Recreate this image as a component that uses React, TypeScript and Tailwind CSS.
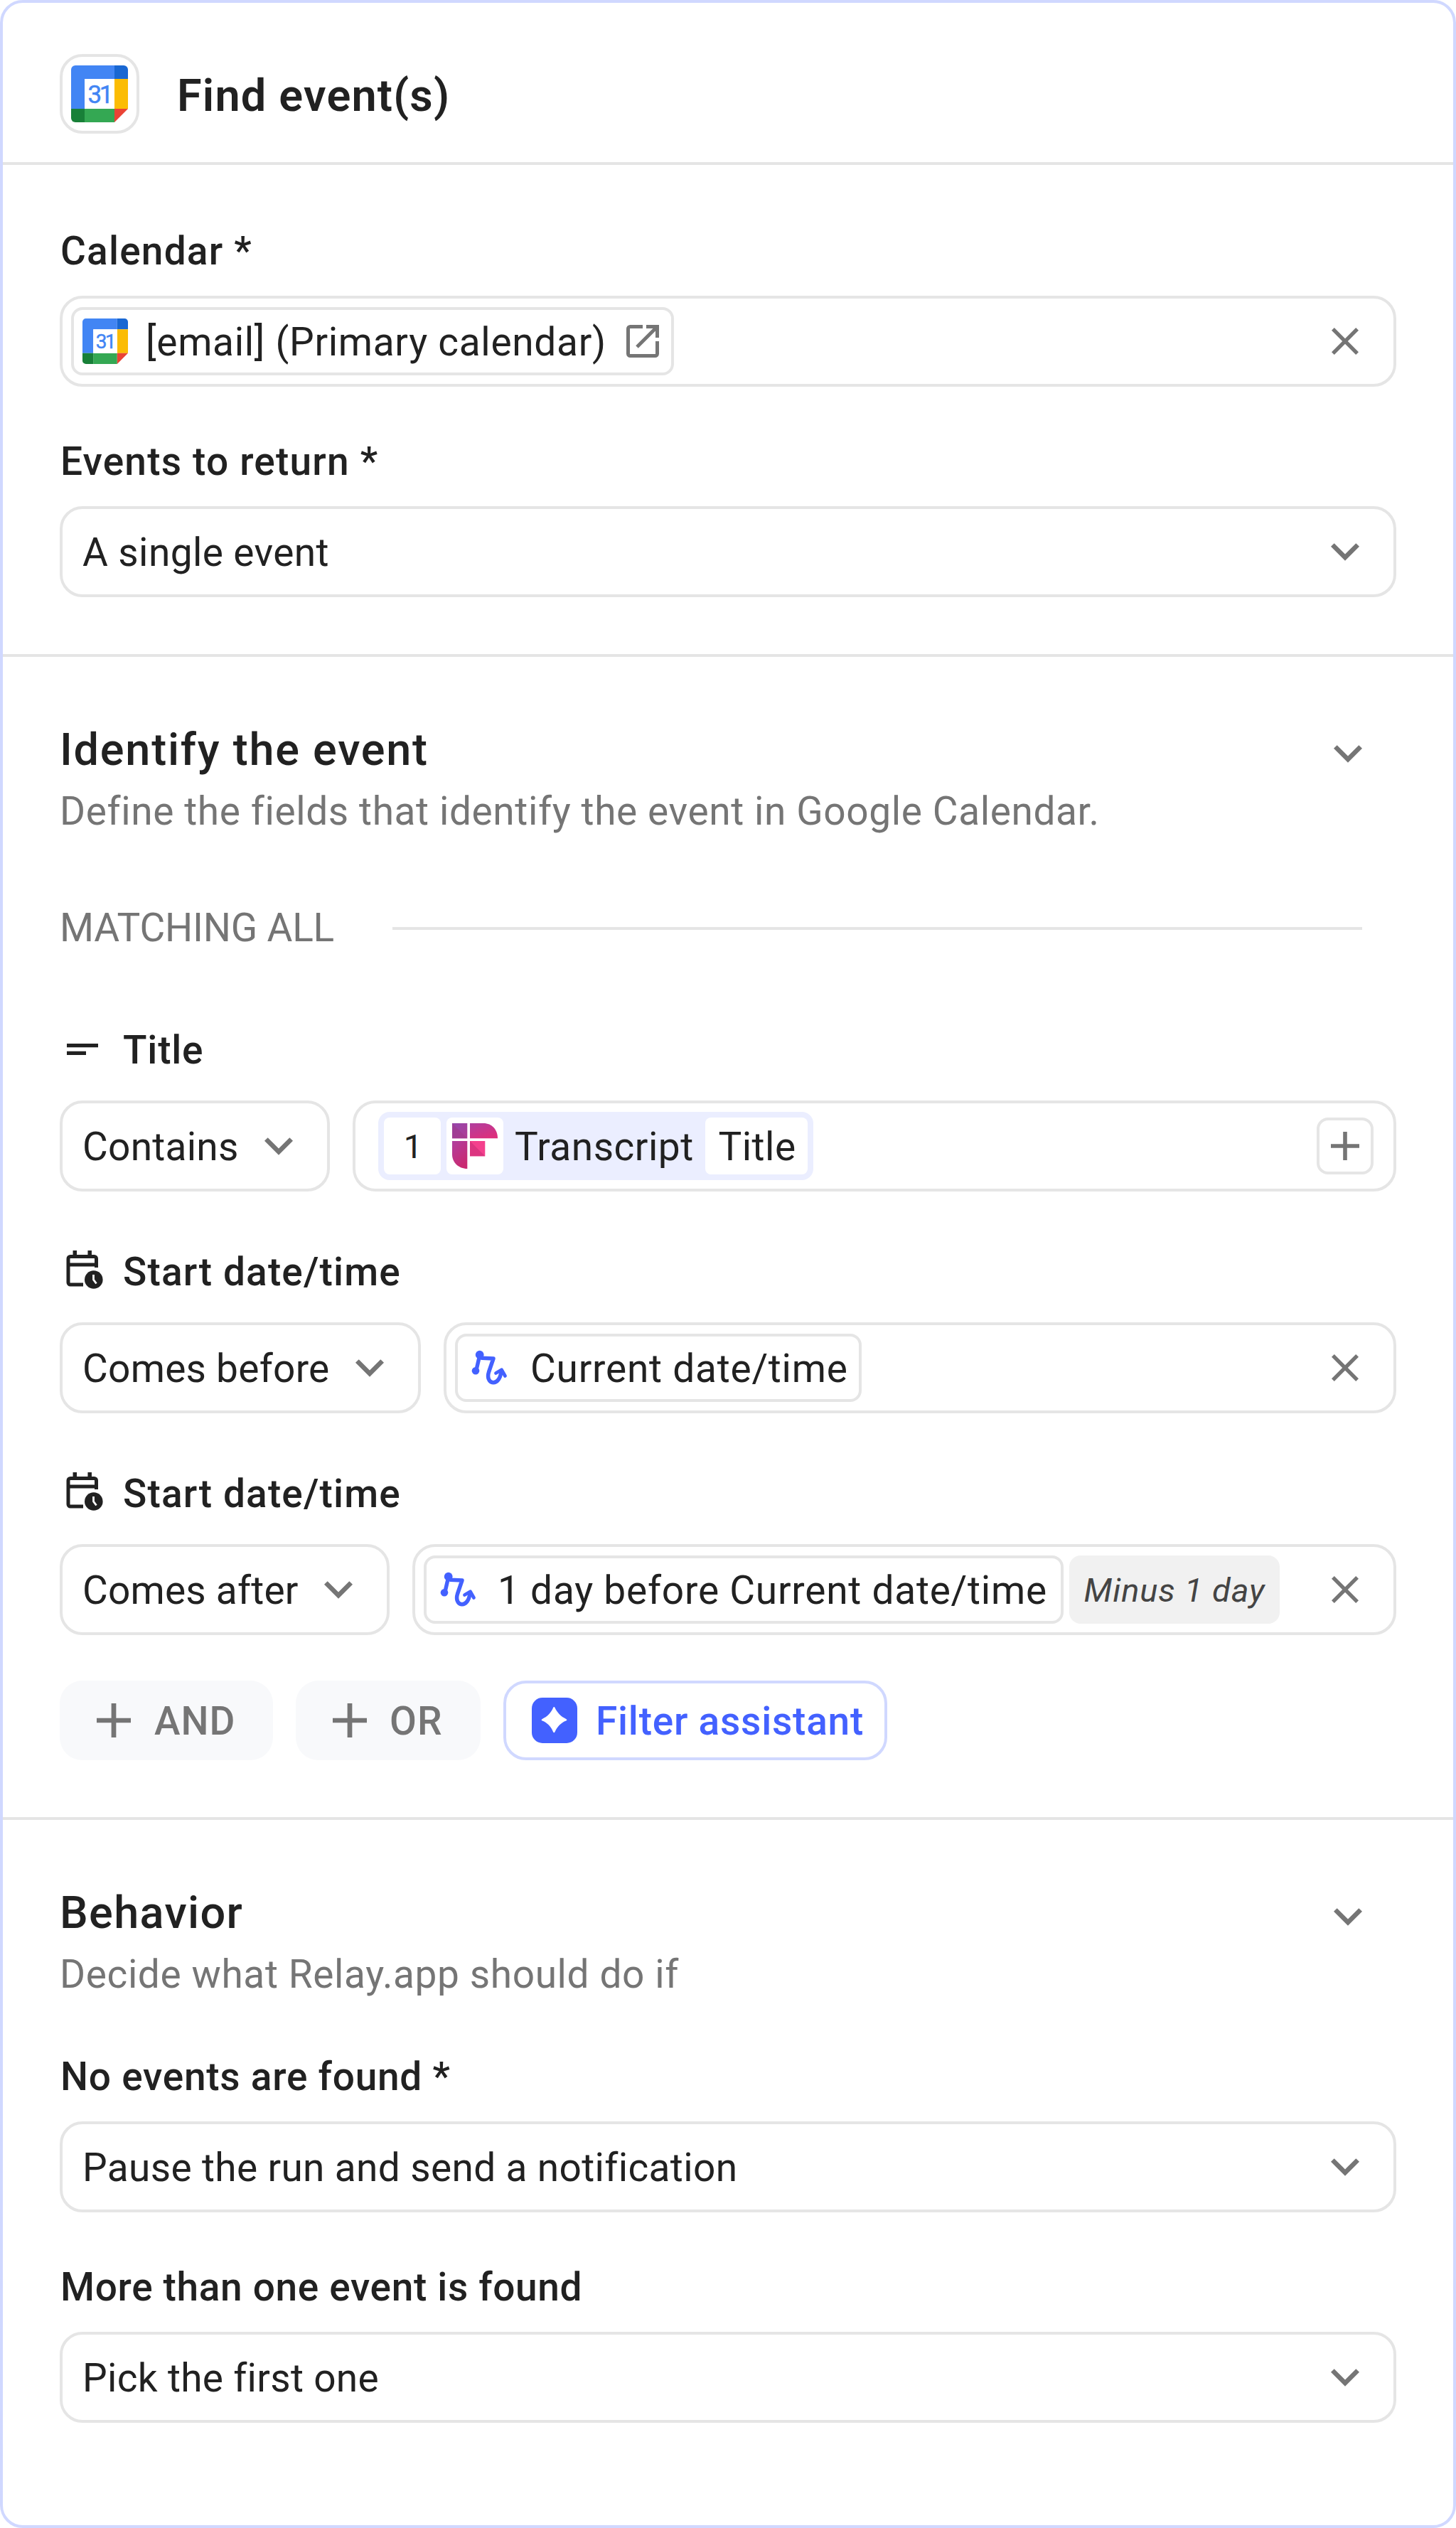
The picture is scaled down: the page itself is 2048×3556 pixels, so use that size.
import type { ReactNode } from 'react';
import clsx from 'clsx';

function GoogleCalendarIcon({ className }: { className?: string }) {
  return (
    <svg viewBox="0 0 80 80" className={clsx('shrink-0', className)}>
      <path d="M19 19h42V0H6a6 6 0 0 0-6 6v55h19z" fill="#4285f4" />
      <path d="M61 0h13a6 6 0 0 1 6 6v13H61z" fill="#1967d2" />
      <path d="M61 19h19v42H61z" fill="#fbbc04" />
      <path d="M19 61h42v19H19z" fill="#34a853" />
      <path d="M0 61h19v19H6a6 6 0 0 1-6-6z" fill="#188038" />
      <path d="M61 61h19L61 80z" fill="#ea4335" />
      <path d="M19 19h42v42H19z" fill="#fff" />
      <text
        x="23.5"
        y="53"
        textLength="36"
        className="font-[Roboto] text-[35px]"
        fill="#4285f4"
        stroke="#4285f4"
        strokeWidth="0.5"
      >
        31
      </text>
    </svg>
  );
}

function ChevronIcon({ className }: { className?: string }) {
  return (
    <svg viewBox="6 8.6 12 7.4" className={clsx('w-10 h-[25px] shrink-0 fill-[#757575]', className)}>
      <path d="M16.59 8.59 12 13.17 7.41 8.59 6 10l6 6 6-6z" />
    </svg>
  );
}

function CloseIcon() {
  return (
    <svg viewBox="5 5 14 14" className="size-[38px] shrink-0 fill-[#757575] ml-auto mr-[49px]">
      <path d="M19 6.41 17.59 5 12 10.59 6.41 5 5 6.41 10.59 12 5 17.59 6.41 19 12 13.41 17.59 19 19 17.59 13.41 12z" />
    </svg>
  );
}

function PlusIcon({ className }: { className?: string }) {
  return (
    <svg viewBox="0 0 40 40" className={clsx('shrink-0 stroke-[#757575]', className)}>
      <path d="M20 0v40M0 20h40" strokeWidth="5.6" />
    </svg>
  );
}

function OpenIcon() {
  return (
    <svg viewBox="0 0 64 64" className="size-16 shrink-0 ml-auto mr-2" fill="none" stroke="#757575" strokeWidth="5">
      <path d="M32 11.5H14.5a3 3 0 0 0-3 3v35a3 3 0 0 0 3 3h35a3 3 0 0 0 3-3V32" />
      <path d="M37 11.5h15.5V27M52.5 11.5 24 40" />
    </svg>
  );
}

function ShortTextIcon() {
  return (
    <svg viewBox="0 0 64 64" className="size-16 shrink-0" fill="#212121">
      <path d="M10 24h44v5.3H10zM10 34.7h27V40H10z" />
    </svg>
  );
}

function CalendarClockIcon() {
  return (
    <svg viewBox="0 0 64 64" className="size-16 shrink-0" fill="none" stroke="#212121" strokeWidth="5">
      <path d="M21.3 3v8M42.2 3v8" strokeWidth="5.5" />
      <path d="M33 51H15a3 3 0 0 1-3-3V14.5a3 3 0 0 1 3-3h33.500a3 3 0 0 1 3 3V27" />
      <path d="M12 23h39.5" />
      <circle cx="47.8" cy="44" r="12.8" fill="#212121" stroke="none" />
      <path d="M47.5 37v7l4 5.5" stroke="#fff" strokeWidth="2.8" />
    </svg>
  );
}

function RelayIcon() {
  return (
    <svg
      viewBox="0 0 64 64"
      className="size-16 shrink-0"
      fill="none"
      stroke="#4361ff"
      strokeWidth="5.5"
      strokeLinecap="round"
      strokeLinejoin="round"
    >
      <circle cx="18.7" cy="13.7" r="5.9" fill="#4361ff" stroke="none" />
      <circle cx="13" cy="36.3" r="5.3" fill="#4361ff" stroke="none" />
      <path d="M14 35 18.5 15.5 22 18.3 38 19 31.5 38C29 46 32 52.5 37.5 52.8S48 47 49 37" />
      <path d="M41.5 39.5 49.5 34.8 54.5 43.500" strokeWidth="4.8" />
    </svg>
  );
}

function FirefliesIcon() {
  return (
    <svg viewBox="0 0 64 64" className="size-16 shrink-0">
      <defs>
        <linearGradient id="ffA" x1="0" y1="0" x2="1" y2="1">
          <stop offset="0" stopColor="#9447ad" />
          <stop offset="1" stopColor="#b03c94" />
        </linearGradient>
        <linearGradient id="ffB" x1="0" y1="0" x2="0.6" y2="1">
          <stop offset="0" stopColor="#b03f9f" />
          <stop offset="1" stopColor="#dc2f7d" />
        </linearGradient>
        <linearGradient id="ffC" x1="0" y1="0" x2="0.5" y2="1">
          <stop offset="0" stopColor="#b03f9f" />
          <stop offset="1" stopColor="#c92a71" />
        </linearGradient>
      </defs>
      <path d="M0 0h21.3v21.3H0z" fill="url(#ffA)" />
      <path d="M0 0 21.3 21.3H0z" fill="#a03a8c" fillOpacity="0.6" />
      <path d="M25 0h19c12 0 20 9 20 21.3H25z" fill="url(#ffB)" />
      <path d="M0 25h21.3v39C9 64 0 55 0 44z" fill="url(#ffC)" />
      <path d="M25 25h21.3v21.3H25z" fill="#f4408d" />
      <path d="M25 25 46.3 46.3H25z" fill="#dc3480" />
    </svg>
  );
}

function SparkIcon() {
  return (
    <svg viewBox="0 0 64 64" className="size-16 shrink-0">
      <rect width="64" height="64" rx="15" fill="#4361ff" />
      <path
        d="M30 14.3q1.3-2.6 2.6 0C35.5 21 41.5 27 48.2 29.9q2.4 1.3 0 2.6C41.5 35 35.5 41 32.6 48q-1.3 2.6-2.6 0C27.5 41 21.5 35 14.8 32.5q-2.4-1.3 0-2.6C21.5 27 27.5 21 30 14.3"
        fill="#fff"
      />
    </svg>
  );
}

function Label({ children, icon, className }: { children: ReactNode; icon?: ReactNode; className?: string }) {
  return (
    <div className="h-20 flex items-center gap-6">
      {icon}
      <span className={clsx('pt-0.5 pl-px font-medium', className)}>{children}</span>
    </div>
  );
}

function Field({ children, className }: { children: ReactNode; className?: string }) {
  return (
    <div className={clsx('h-32 flex items-center rounded-[32px] border-4 border-[#e5e5e5]', className)}>
      {children}
    </div>
  );
}

function Select({ value, className }: { value: string; className?: string }) {
  return (
    <Field className={clsx('pl-7 pr-12 justify-between', className)}>
      <span className="pt-0.5">{value}</span>
      <ChevronIcon />
    </Field>
  );
}

function Chip({ children, className }: { children: ReactNode; className?: string }) {
  return (
    <div className={clsx('h-24 flex items-center shrink-0 rounded-2xl border-4 border-[#e5e5e5] pl-3', className)}>
      {children}
    </div>
  );
}

function SectionHeader({ title, subtitle, className }: { title: string; subtitle: string; className: string }) {
  return (
    <div className="flex justify-between">
      <div>
        <h2 className={clsx('h-24 leading-[101px] text-[63px] font-medium', className)}>{title}</h2>
        <p className="h-20 leading-[82px] tracking-[0.61px] text-[#757575]">{subtitle}</p>
      </div>
      <ChevronIcon className="mt-11 mr-12" />
    </div>
  );
}

export default function App() {
  return (
    <div className="w-[2048px] h-[3556px] bg-white">
      <div className="h-full flex flex-col rounded-[32px] border-4 border-[#d0d8ff] font-[Roboto,sans-serif] text-[55px] leading-none text-[#212121] whitespace-nowrap">
        {/* Header */}
        <header className="h-[228px] shrink-0 flex items-start gap-[53px] px-20 pt-[72px] border-b-4 border-[#e5e5e5]">
          <div className="size-28 flex items-center justify-center rounded-[32px] border-4 border-[#e5e5e5]">
            <GoogleCalendarIcon className="size-20" />
          </div>
          <h1 className="h-28 leading-[117px] text-[63px] font-semibold tracking-[1.2px]">Find event(s)</h1>
        </header>

        {/* Calendar */}
        <section className="px-20 py-20 border-b-4 border-[#e5e5e5] flex flex-col gap-16">
          <div className="flex flex-col gap-6">
            <Label className="tracking-[1.2px]">Calendar *</Label>
            <Field className="pl-3">
              <Chip className="w-[848px]">
                <GoogleCalendarIcon className="size-16" />
                <span className="ml-[25px] pt-0.5 tracking-[0.7px]">[email] (Primary calendar)</span>
                <OpenIcon />
              </Chip>
              <CloseIcon />
            </Field>
          </div>
          <div className="flex flex-col gap-6">
            <Label className="tracking-[1.2px]">Events to return *</Label>
            <Select value="A single event" className="tracking-[0.4px]" />
          </div>
        </section>

        {/* Identify the event */}
        <section className="px-20 py-20 border-b-4 border-[#e5e5e5]">
          <SectionHeader
            title="Identify the event"
            subtitle="Define the fields that identify the event in Google Calendar."
            className="tracking-[1.75px]"
          />

          <div className="mt-[84px] h-20 flex items-center pr-12 text-[#757575]">
            <span className="w-[468px] pt-0.5 tracking-[-0.2px]">MATCHING ALL</span>
            <div className="mt-1 h-1 grow bg-[#e5e5e5]" />
          </div>

          <div className="mt-[92px] flex flex-col gap-[72px]">
            <div className="flex flex-col gap-8">
              <Label icon={<ShortTextIcon />} className="tracking-[0.8px]">Title</Label>
              <div className="flex gap-8">
                <Select value="Contains" className="w-[380px] tracking-[0.25px]" />
                <Field className="grow pl-8 pr-7">
                  <div className="h-24 w-[612px] flex items-center gap-2 p-2 rounded-2xl bg-[#ebeeff]">
                    <div className="size-20 flex items-center justify-center rounded-lg bg-white pl-0.5 text-[47px]">1</div>
                    <div className="size-20 flex items-center justify-center rounded-lg bg-white">
                      <FirefliesIcon />
                    </div>
                    <span className="ml-2 pt-0.5 tracking-[0.5px]">Transcript</span>
                    <div className="ml-auto w-36 h-20 flex items-center justify-center rounded-lg bg-white pt-0.5 pl-0.5 tracking-[0.5px]">
                      Title
                    </div>
                  </div>
                  <div className="ml-auto size-20 flex items-center justify-center rounded-2xl border-4 border-[#e5e5e5]">
                    <PlusIcon className="size-10" />
                  </div>
                </Field>
              </div>
            </div>

            <div className="flex flex-col gap-8">
              <Label icon={<CalendarClockIcon />} className="tracking-[1.15px]">Start date/time</Label>
              <div className="flex gap-8">
                <Select value="Comes before" className="w-[508px] tracking-[0.25px]" />
                <Field className="grow pl-3">
                  <Chip className="w-[572px]">
                    <RelayIcon />
                    <span className="ml-[26px] pt-0.5 tracking-[0.77px]">Current date/time</span>
                  </Chip>
                  <CloseIcon />
                </Field>
              </div>
            </div>

            <div className="flex flex-col gap-8">
              <Label icon={<CalendarClockIcon />} className="tracking-[1.15px]">Start date/time</Label>
              <div className="flex gap-8">
                <Select value="Comes after" className="w-[464px] tracking-[0.2px]" />
                <Field className="grow pl-3">
                  <Chip className="w-[900px]">
                    <RelayIcon />
                    <span className="ml-6 pt-0.5 tracking-[0.77px]">1 day before Current date/time</span>
                  </Chip>
                  <div className="ml-2 w-[296px] h-24 flex items-center justify-center rounded-2xl bg-[#f1f1f1] text-[47px] italic tracking-[0.9px] text-[#444444]">
                    Minus 1 day
                  </div>
                  <CloseIcon />
                </Field>
              </div>
            </div>
          </div>

          <div className="mt-16 flex gap-8 font-medium">
            <button className="w-[300px] h-28 flex items-center gap-[33px] pl-[52px] rounded-[32px] bg-[#f8f9fb] text-[#757575]">
              <PlusIcon className="size-12" />
              <span className="pt-0.5 tracking-[1px]">AND</span>
            </button>
            <button className="w-[260px] h-28 flex items-center gap-8 pl-[52px] rounded-[32px] bg-[#f8f9fb] text-[#757575]">
              <PlusIcon className="size-12" />
              <span className="pt-0.5 tracking-[1px]">OR</span>
            </button>
            <button className="w-[540px] h-28 flex items-center gap-[26px] pl-9 rounded-[32px] border-4 border-[#d0d8ff] text-[#4361ff]">
              <SparkIcon />
              <span className="pt-0.5 tracking-[0.77px]">Filter assistant</span>
            </button>
          </div>
        </section>

        {/* Behavior */}
        <section className="px-20 pt-20">
          <SectionHeader
            title="Behavior"
            subtitle="Decide what Relay.app should do if"
            className="tracking-[1.35px]"
          />
          <div className="mt-16 flex flex-col gap-6">
            <Label className="tracking-[0.75px]">No events are found *</Label>
            <Select value="Pause the run and send a notification" className="tracking-[0.35px]" />
          </div>
          <div className="mt-16 flex flex-col gap-6">
            <Label className="tracking-[0.65px]">More than one event is found</Label>
            <Select value="Pick the first one" className="tracking-[0.3px]" />
          </div>
        </section>
      </div>
    </div>
  );
}
